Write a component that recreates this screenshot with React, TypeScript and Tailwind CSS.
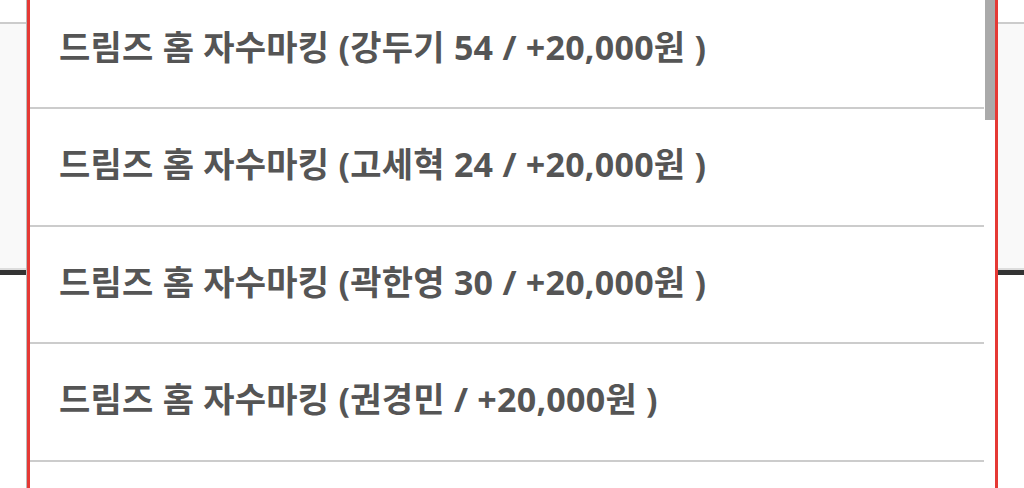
import React from 'react';

const options = [
    '드림즈 홈 자수마킹 (강두기 54 / +20,000원 )',
    '드림즈 홈 자수마킹 (고세혁 24 / +20,000원 )',
    '드림즈 홈 자수마킹 (곽한영 30 / +20,000원 )',
    '드림즈 홈 자수마킹 (권경민 / +20,000원 )',
];

export default function App() {
    return (
        <div className="relative w-[1024px] h-[488px] overflow-hidden bg-white">
            {/* page content behind the open select */}
            <div className="pt-[22px]">
                <div className="h-[253px] bg-[#f9f9f9] border-t-2 border-[#cccccc]">
                    <div className="h-full border-b-[5px] border-[#333333]">
                        <div className="h-full border-b-2 border-[#dddddd]" />
                    </div>
                </div>
            </div>

            {/* dropdown list */}
            <div className="absolute left-[26px] top-0 w-[972px] h-[488px] border-l border-[#bbbbbb] bg-white">
                <div className="flex h-full border-l-[3px] border-r-[3px] border-[#e53935]">
                    <div className="flex-1 overflow-hidden">
                        <ul className="-mt-[8.5px]">
                            {options.map((label) => (
                                <li
                                    key={label}
                                    className="flex items-center h-[117.5px] border-b-2 border-[#cccccc] pl-[29px] pb-[4px] text-[34px] font-bold tracking-[0.25px] text-[#555555] whitespace-nowrap"
                                    style={{ fontFamily: '"Open Sans", "Noto Sans CJK KR", sans-serif' }}
                                >
                                    {label}
                                </li>
                            ))}
                        </ul>
                    </div>
                    <div className="w-[10px] ml-[1px]">
                        <div className="h-[120px] bg-[#aaaaaa]" />
                    </div>
                </div>
            </div>
        </div>
    );
}
